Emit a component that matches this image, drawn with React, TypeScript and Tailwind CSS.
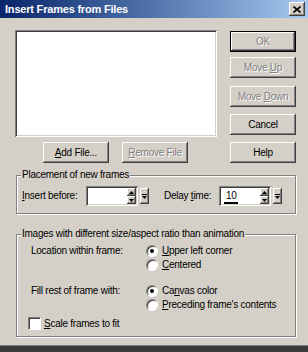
import type { ReactNode } from "react";

const raised =
  "bg-[#d4d0c8] shadow-[inset_-1px_-1px_0_#404040,inset_1px_1px_0_#fff,inset_-2px_-2px_0_#808080,inset_2px_2px_0_#d4d0c8]";
const sunken =
  "bg-white shadow-[inset_1px_1px_0_#808080,inset_-1px_-1px_0_#fff,inset_2px_2px_0_#404040,inset_-2px_-2px_0_#d4d0c8]";
const grayText = "text-[#808080] [text-shadow:1px_1px_0_#fff]";

const Btn = ({
  children,
  disabled,
  def,
  className = "",
}: {
  children: ReactNode;
  disabled?: boolean;
  def?: boolean;
  className?: string;
}) => (
  <div
    className={`flex h-[21px] w-[66px] items-center justify-center ${
      def ? "border border-black" : ""
    } ${className}`}
  >
    <div className={`flex h-full w-full items-center justify-center ${raised}`}>
      <span className={disabled ? grayText : "text-black"}>{children}</span>
    </div>
  </div>
);

const Arrow = ({ up }: { up?: boolean }) => (
  <svg viewBox="0 0 5 3" className="h-[3px] w-[5px]">
    <path d={up ? "M2.5 0L5 3H0Z" : "M0 0H5L2.5 3Z"} fill="#000" />
  </svg>
);

const Spin = ({ value, caret }: { value?: string; caret?: boolean }) => (
  <div className="flex items-center">
    <div className={`flex h-[20px] w-[52px] p-[2px] ${sunken}`}>
      <div className="relative flex flex-1 items-center pl-[5px] text-black">
        {value}
        {caret && <div className="absolute bottom-[0px] left-[3px] h-[2px] w-[14px] bg-black" />}
      </div>
      <div className="flex w-[9px] flex-col">
        <div className={`flex h-[8px] items-center justify-center ${raised}`}>
          <Arrow up />
        </div>
        <div className={`flex h-[8px] items-center justify-center ${raised}`}>
          <Arrow />
        </div>
      </div>
    </div>
    <div className={`ml-[2px] flex h-[16px] w-[9px] flex-col items-center justify-center gap-[1px] ${raised}`}>
      <div className="h-[1px] w-[5px] bg-black" />
      <Arrow />
    </div>
  </div>
);

const Radio = ({ checked, children }: { checked?: boolean; children: ReactNode }) => (
  <div className="flex h-[14px] items-center gap-[4px]">
    <div className="flex h-[12px] w-[12px] items-center justify-center rounded-full border border-t-[#808080] border-l-[#808080] border-r-white border-b-white bg-white shadow-[inset_1px_1px_0_#404040]">
      {checked && <div className="h-[4px] w-[4px] rounded-full bg-black" />}
    </div>
    <span>{children}</span>
  </div>
);

export default function App() {
  return (
    <div className="flex h-[352px] w-[308px] flex-col overflow-hidden bg-[#d4d0c8] font-['Liberation_Sans',Arial,sans-serif] text-[10px] leading-[12px] tracking-[-0.25px] text-black">
      {/* title bar */}
      <div className="flex h-[18px] shrink-0 items-center bg-linear-to-r from-[#0a246a] to-[#a6caf0] pl-[5px] pr-[3px]">
        <span className="text-[11px] font-bold tracking-[-0.2px] text-white">Insert Frames from Files</span>
        <div className={`ml-auto flex h-[14px] w-[16px] items-center justify-center ${raised}`}>
          <svg viewBox="0 0 8 7" className="h-[7px] w-[8px]">
            <path d="M0.5 0.5L7.5 6.5M7.5 0.5L0.5 6.5" stroke="#000" strokeWidth="1.6" />
          </svg>
        </div>
      </div>

      {/* list + side buttons */}
      <div className="mt-[12px] flex pl-[15px]">
        <div className={`h-[107px] w-[202px] ${sunken}`} />
        <div className="ml-[13px] flex flex-col">
          <Btn def disabled className="mt-[1px]">
            OK
          </Btn>
          <Btn disabled className="mt-[5px]">
            Move <u>U</u>p
          </Btn>
          <Btn disabled className="mt-[8px]">
            Move <u>D</u>own
          </Btn>
          <Btn className="mt-[7px]">Cancel</Btn>
        </div>
      </div>

      <div className="mt-[5px] flex pl-[43px] pr-[12px]">
        <Btn>
          <u>A</u>dd File...
        </Btn>
        <Btn disabled className="ml-[13px]">
          <u>R</u>emove File
        </Btn>
        <Btn className="ml-auto">Help</Btn>
      </div>

      {/* placement group */}
      <div className="ml-[16px] mt-[12px] flex h-[39px] w-[280px] flex-col border border-[#808080] shadow-[inset_1px_1px_0_#fff,1px_1px_0_#fff]">
        <span className="-mt-[7px] ml-[4px] self-start bg-[#d4d0c8] px-[1px]">Placement of new frames</span>
        <div className="mt-[5px] flex items-center pl-[5px]">
          <span className="w-[64px]">
            <u>I</u>nsert before:
          </span>
          <Spin />
          <span className="ml-[15px] w-[55px]">
            Delay <u>t</u>ime:
          </span>
          <Spin value="10" caret />
        </div>
      </div>

      {/* size group */}
      <div className="ml-[16px] mt-[20px] flex h-[103px] w-[280px] flex-col border border-[#808080] shadow-[inset_1px_1px_0_#fff,1px_1px_0_#fff]">
        <span className="-mt-[7px] ml-[4px] self-start bg-[#d4d0c8] px-[1px]">
          Images with different size/aspect ratio than animation
        </span>
        <div className="mt-[4px] flex pl-[14px]">
          <span className="flex h-[14px] w-[115px] items-center">Location within frame:</span>
          <div className="flex flex-col">
            <Radio checked>
              <u>U</u>pper left corner
            </Radio>
            <Radio>
              <u>C</u>entered
            </Radio>
          </div>
        </div>
        <div className="mt-[12px] flex pl-[14px]">
          <span className="flex h-[14px] w-[115px] items-center">Fill rest of frame with:</span>
          <div className="flex flex-col">
            <Radio checked>
              Ca<u>n</u>vas color
            </Radio>
            <Radio>
              <u>P</u>receding frame's contents
            </Radio>
          </div>
        </div>
        <div className="mt-[5px] flex items-center gap-[3px] pl-[11px]">
          <div className="h-[13px] w-[13px] border border-t-[#808080] border-l-[#808080] border-r-white border-b-white bg-white shadow-[inset_1px_1px_0_#404040]" />
          <span>
            <u>S</u>cale frames to fit
          </span>
        </div>
      </div>

      <div className="mt-auto h-[1px] bg-[#808080]" />
      <div className="h-[6px] bg-[#3a3a3a]" />
    </div>
  );
}
